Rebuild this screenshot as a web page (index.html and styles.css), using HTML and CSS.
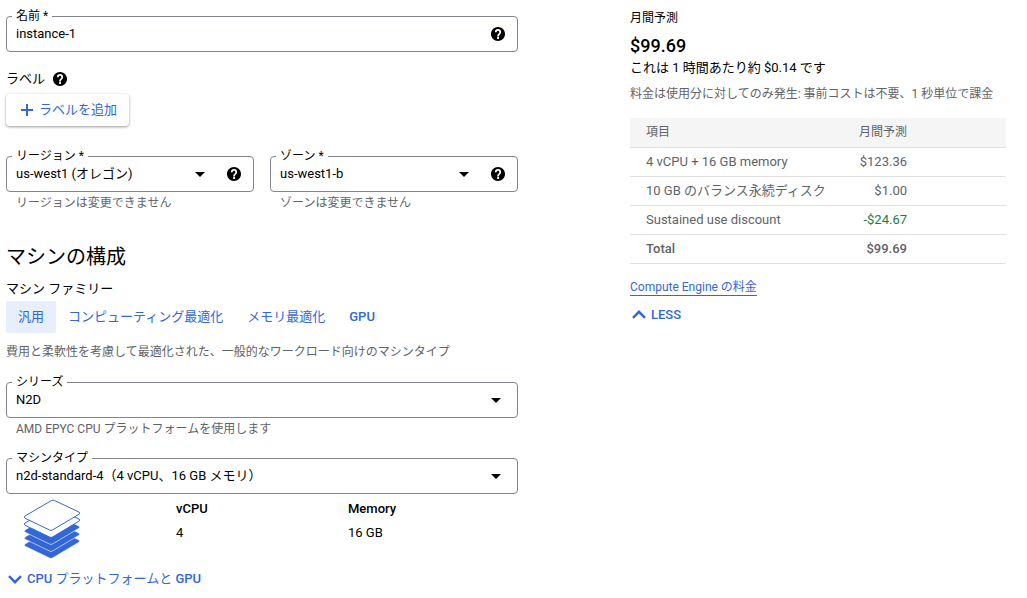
FILE: index.html
```html
<!DOCTYPE html>
<html lang="ja">
<head>
	<meta charset="UTF-8">
	<meta name="viewport" content="width=device-width, initial-scale=1">
	<title>インスタンスの作成</title>
	<link rel="stylesheet" href="styles.css">
</head>
<body>
	<svg class="sprite" aria-hidden="true">
		<symbol id="help" viewBox="2 2 20 20">
			<path d="M12 2C6.48 2 2 6.48 2 12s4.48 10 10 10 10-4.48 10-10S17.52 2 12 2zm1.4 17h-2.6v-2.6h2.6V19zm2.2-7.4l-.95.97c-.75.76-1.25 1.43-1.25 2.93h-2.6v-.6c0-1.1.5-2.1 1.25-2.85l1.25-1.25c.37-.36.6-.86.6-1.4a1.9 1.9 0 0 0-3.8 0H7.6a4.4 4.4 0 0 1 8.8 0c0 .88-.3 1.7-.8 2.2z"/>
		</symbol>
		<symbol id="caret" viewBox="0 0 10 5">
			<path d="M0 0h10L5 5z"/>
		</symbol>
		<symbol id="chevron" viewBox="0 0 14 9">
			<path d="M1 1.2l6 6 6-6" fill="none" stroke="currentColor" stroke-width="2.4"/>
		</symbol>
	</svg>

	<div class="page">
		<form class="config">
			<div class="field">
				<label class="field-label" for="name">名前 *</label>
				<input class="field-input" type="text" id="name" value="instance-1">
				<button type="button" class="help" aria-label="名前"><svg><use href="#help"/></svg></button>
			</div>

			<div class="labels">
				<span>ラベル</span>
				<button type="button" class="help" aria-label="ラベル"><svg><use href="#help"/></svg></button>
			</div>
			<button type="button" class="btn-add">
				<svg viewBox="0 0 12 12"><path d="M6 0v12M0 6h12" stroke="currentColor" stroke-width="2"/></svg>
				ラベルを追加
			</button>

			<div class="location">
				<div>
					<div class="field">
						<label class="field-label" for="region">リージョン *</label>
						<select class="field-input" id="region"><option>us-west1 (オレゴン)</option></select>
						<svg class="caret"><use href="#caret"/></svg>
						<button type="button" class="help" aria-label="リージョン"><svg><use href="#help"/></svg></button>
					</div>
					<p class="hint">リージョンは変更できません</p>
				</div>
				<div>
					<div class="field">
						<label class="field-label" for="zone">ゾーン *</label>
						<select class="field-input" id="zone"><option>us-west1-b</option></select>
						<svg class="caret"><use href="#caret"/></svg>
						<button type="button" class="help" aria-label="ゾーン"><svg><use href="#help"/></svg></button>
					</div>
					<p class="hint">ゾーンは変更できません</p>
				</div>
			</div>

			<h2 class="title">マシンの構成</h2>
			<h3 class="subtitle">マシン ファミリー</h3>
			<div class="tabs">
				<button type="button" class="tab active">汎用</button>
				<button type="button" class="tab">コンピューティング最適化</button>
				<button type="button" class="tab">メモリ最適化</button>
				<button type="button" class="tab">GPU</button>
			</div>
			<p class="desc">費用と柔軟性を考慮して最適化された、一般的なワークロード向けのマシンタイプ</p>

			<div class="field wide">
				<label class="field-label" for="series">シリーズ</label>
				<select class="field-input" id="series"><option>N2D</option></select>
				<svg class="caret"><use href="#caret"/></svg>
			</div>
			<p class="hint">AMD EPYC CPU プラットフォームを使用します</p>

			<div class="field wide machine-type">
				<label class="field-label" for="type">マシンタイプ</label>
				<select class="field-input" id="type"><option>n2d-standard-4（4 vCPU、16 GB メモリ）</option></select>
				<svg class="caret"><use href="#caret"/></svg>
			</div>

			<div class="specs">
				<svg class="stack" viewBox="0 0 58 60">
					<defs>
						<path id="layer" d="M2 17L28.500 1.500q1.500-.8 3 0L56 13q1.500 1 0 2.200L29.500 31q-1.500.8-3 0L2 19.200q-1.500-1 0-2.200z"/>
					</defs>
					<g fill="#3367d6" stroke="#fff" stroke-width=".6">
						<use href="#layer" y="28"/>
						<use href="#layer" y="21"/>
						<use href="#layer" y="14"/>
					</g>
					<g fill="#fff" stroke="#3367d6">
						<use href="#layer" y="7"/>
						<use href="#layer"/>
					</g>
				</svg>
				<dl class="spec">
					<dt>vCPU</dt>
					<dd>4</dd>
				</dl>
				<dl class="spec">
					<dt>Memory</dt>
					<dd>16 GB</dd>
				</dl>
			</div>

			<button type="button" class="toggle">
				<svg><use href="#chevron"/></svg><span>CPU <span class="ja">プラットフォームと</span> GPU</span>
			</button>
		</form>

		<aside class="estimate">
			<p class="estimate-label">月間予測</p>
			<p class="price">$99.69</p>
			<p class="hourly">これは 1 時間あたり約 $0.14 です</p>
			<p class="note">料金は使用分に対してのみ発生: 事前コストは不要、1 秒単位で課金</p>
			<table class="costs">
				<thead>
					<tr><th>項目</th><th class="num">月間予測</th></tr>
				</thead>
				<tbody>
					<tr><td>4 vCPU + 16 GB memory</td><td class="num">$123.36</td></tr>
					<tr><td>10 GB のバランス永続ディスク</td><td class="num">$1.00</td></tr>
					<tr><td>Sustained use discount</td><td class="num discount">-$24.67</td></tr>
					<tr class="total"><td>Total</td><td class="num">$99.69</td></tr>
				</tbody>
			</table>
			<a class="pricing" href="#">Compute Engine の料金</a>
			<button type="button" class="toggle less">
				<svg><use href="#chevron"/></svg>LESS
			</button>
		</aside>
	</div>
</body>
</html>
```
FILE: styles.css
```css
*{
	box-sizing: border-box;
	margin: 0;
	padding: 0;
}
body{
	background: #fff;
	color: #000;
	font-family: Roboto, "Noto Sans CJK JP", sans-serif;
	font-size: 13px;
	line-height: 20px;
}
button, input, select{
	font: inherit;
	color: inherit;
	border: 0;
	background: none;
}
button{
	cursor: pointer;
}
svg{
	display: block;
	flex: none;
}
.sprite{
	display: none;
}
.page{
	display: grid;
	grid-template-columns: minmax(0, 1fr) 376px;
	gap: 112px;
	padding: 8px 21px 8px 6px;
}
.config{
	padding-top: 8px;
}

/* outlined fields */
.field{
	position: relative;
	display: flex;
	align-items: center;
	height: 36px;
	padding-right: 12px;
	border: 1px solid #80868b;
	border-radius: 4px;
}
.field.wide{
	padding-right: 16px;
}
.field-label{
	position: absolute;
	top: -9px;
	left: 5px;
	padding: 0 4px;
	background: #fff;
	font-size: 12px;
	line-height: 16px;
}
.field-input{
	flex: 1;
	min-width: 0;
	height: 34px;
	padding-left: 9px;
	outline: none;
	appearance: none;
}
input.field-input{
	padding-bottom: 2px;
}
.caret{
	width: 10px;
	height: 5px;
	pointer-events: none;
}
.caret + .help{
	margin-left: 22px;
}
.help svg{
	width: 14px;
	height: 14px;
}
.hint{
	padding: 1px 0 0 10px;
	color: #5f6368;
	font-size: 12px;
}

.labels{
	display: flex;
	align-items: center;
	gap: 8px;
	margin-top: 17px;
}
.btn-add{
	display: flex;
	align-items: center;
	gap: 6px;
	height: 32px;
	margin-top: 5px;
	padding: 0 12px 0 15px;
	border-radius: 4px;
	box-shadow: 0 1px 3px rgba(0, 0, 0, .4);
	color: #3367d6;
}
.btn-add svg{
	width: 12px;
	height: 12px;
}
.location{
	display: grid;
	grid-template-columns: 1fr 1fr;
	gap: 16px;
	margin-top: 30px;
}

.title{
	margin-top: 28px;
	font-size: 20px;
	font-weight: 400;
	line-height: 32px;
}
.subtitle{
	margin-top: 6px;
	font-size: 13px;
	font-weight: 400;
}
.tabs{
	display: flex;
	margin-top: 2px;
}
.tab{
	height: 32px;
	padding: 0 12px;
	border-radius: 2px;
	color: #3367d6;
}
.tab:last-child{
	font-weight: 500;
}
.tab.active{
	background: #e8effc;
}
.desc{
	margin: 9px 0 20px;
	color: #5f6368;
	font-size: 12px;
}
.machine-type{
	margin-top: 19px;
}
.specs{
	display: grid;
	grid-template-columns: 170px 172px 1fr;
	margin-top: 5px;
}
.stack{
	width: 58px;
	height: 60px;
	margin-left: 17px;
}
.spec dd{
	margin-top: 4px;
}
.spec dt{
	font-weight: 500;
}
.toggle{
	display: flex;
	align-items: center;
	gap: 5px;
	margin-top: 10px;
	padding-left: 2px;
	color: #3367d6;
	font-weight: 500;
}
.toggle svg{
	width: 14px;
	height: 9px;
}
.toggle .ja{
	font-weight: 400;
}

/* monthly estimate */
.estimate-label{
	font-size: 12px;
}
.price{
	margin-top: 6px;
	font-size: 18px;
	font-weight: 500;
	line-height: 24px;
}
.note{
	margin: 6px 0 14px;
	color: #5f6368;
	font-size: 12px;
	white-space: nowrap;
}
.costs{
	width: 100%;
	border-collapse: collapse;
	color: #5f6368;
}
.costs th{
	background: #f5f5f5;
	font-size: 12px;
	font-weight: 400;
	text-align: left;
}
.costs th, .costs td{
	height: 29px;
	padding-left: 16px;
	border-bottom: 1px solid #e0e0e0;
}
.costs .num{
	width: 178px;
	padding: 0 99px 0 0;
	text-align: right;
}
.costs .discount{
	color: #188038;
}
.costs .total{
	font-weight: 500;
}
.pricing{
	display: inline-block;
	margin-top: 15px;
	border-bottom: 1px solid #3367d6;
	color: #3367d6;
	font-size: 12px;
	line-height: 16px;
	text-decoration: none;
}
.less{
	margin-top: 8px;
}
.less svg{
	transform: rotate(180deg);
}
```
